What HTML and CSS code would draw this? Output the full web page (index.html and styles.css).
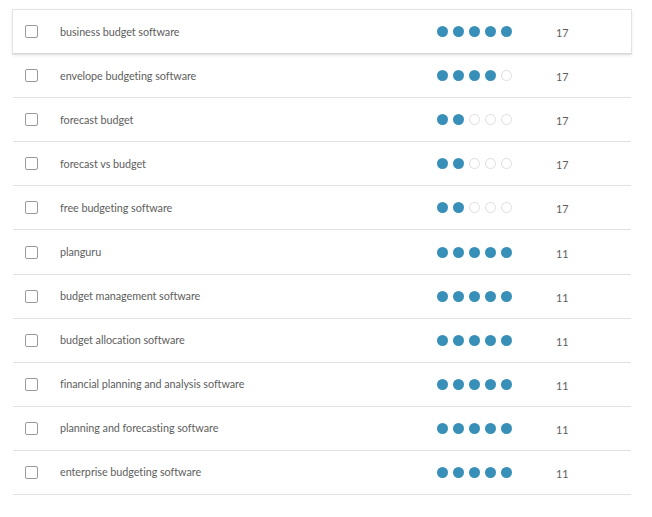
FILE: index.html
```html
<!DOCTYPE html>
<html>
<head>
<meta charset="utf-8">
<link rel="stylesheet" href="styles.css">
</head>
<body>
<div class="list">
  <div class="row active"><span class="cb"></span><span class="kw">business budget software</span><span class="dots"><i class="on"></i><i class="on"></i><i class="on"></i><i class="on"></i><i class="on"></i></span><span class="num">17</span></div>
  <div class="row"><span class="cb"></span><span class="kw">envelope budgeting software</span><span class="dots"><i class="on"></i><i class="on"></i><i class="on"></i><i class="on"></i><i></i></span><span class="num">17</span></div>
  <div class="row"><span class="cb"></span><span class="kw">forecast budget</span><span class="dots"><i class="on"></i><i class="on"></i><i></i><i></i><i></i></span><span class="num">17</span></div>
  <div class="row"><span class="cb"></span><span class="kw">forecast vs budget</span><span class="dots"><i class="on"></i><i class="on"></i><i></i><i></i><i></i></span><span class="num">17</span></div>
  <div class="row"><span class="cb"></span><span class="kw">free budgeting software</span><span class="dots"><i class="on"></i><i class="on"></i><i></i><i></i><i></i></span><span class="num">17</span></div>
  <div class="row"><span class="cb"></span><span class="kw">planguru</span><span class="dots"><i class="on"></i><i class="on"></i><i class="on"></i><i class="on"></i><i class="on"></i></span><span class="num">11</span></div>
  <div class="row"><span class="cb"></span><span class="kw">budget management software</span><span class="dots"><i class="on"></i><i class="on"></i><i class="on"></i><i class="on"></i><i class="on"></i></span><span class="num">11</span></div>
  <div class="row"><span class="cb"></span><span class="kw">budget allocation software</span><span class="dots"><i class="on"></i><i class="on"></i><i class="on"></i><i class="on"></i><i class="on"></i></span><span class="num">11</span></div>
  <div class="row"><span class="cb"></span><span class="kw">financial planning and analysis software</span><span class="dots"><i class="on"></i><i class="on"></i><i class="on"></i><i class="on"></i><i class="on"></i></span><span class="num">11</span></div>
  <div class="row"><span class="cb"></span><span class="kw">planning and forecasting software</span><span class="dots"><i class="on"></i><i class="on"></i><i class="on"></i><i class="on"></i><i class="on"></i></span><span class="num">11</span></div>
  <div class="row"><span class="cb"></span><span class="kw">enterprise budgeting software</span><span class="dots"><i class="on"></i><i class="on"></i><i class="on"></i><i class="on"></i><i class="on"></i></span><span class="num">11</span></div>
</div>
</body>
</html>
```
FILE: styles.css
```css
html, body {
  margin: 0;
  padding: 0;
  background: #fff;
}
body {
  font-family: Lato, "Open Sans", sans-serif;
  font-size: 10.8px;
  color: #5e5e5e;
}
.list {
  margin: 10px 0 0 13px;
  width: 618px;
}
.row {
  display: grid;
  grid-template-columns: 35px 377px 119px 1fr;
  align-items: center;
  height: 43.1px;
  padding-left: 12px;
  border-bottom: 1px solid #e2e2e2;
  box-sizing: content-box;
}
.row.active {
  box-shadow: 0 0 0 1px #e4e4e4, 0 1px 4px rgba(0, 0, 0, 0.12);
  border-bottom-color: #d8d8d8;
}
.cb {
  width: 11px;
  height: 11px;
  border: 1px solid #9a9a9a;
  border-radius: 2px;
  background: #fff;
}
.kw {
  line-height: 14px;
  letter-spacing: -0.05px;
}
.dots {
  display: flex;
  gap: 5px;
  align-items: center;
}
.dots i {
  display: block;
  width: 9px;
  height: 9px;
  border-radius: 50%;
  border: 1px solid #dedede;
  background: #fff;
}
.dots i.on {
  width: 11px;
  height: 11px;
  border: 0;
  background: #388fb8;
}
.num {
  padding-top: 2px;
}
```
